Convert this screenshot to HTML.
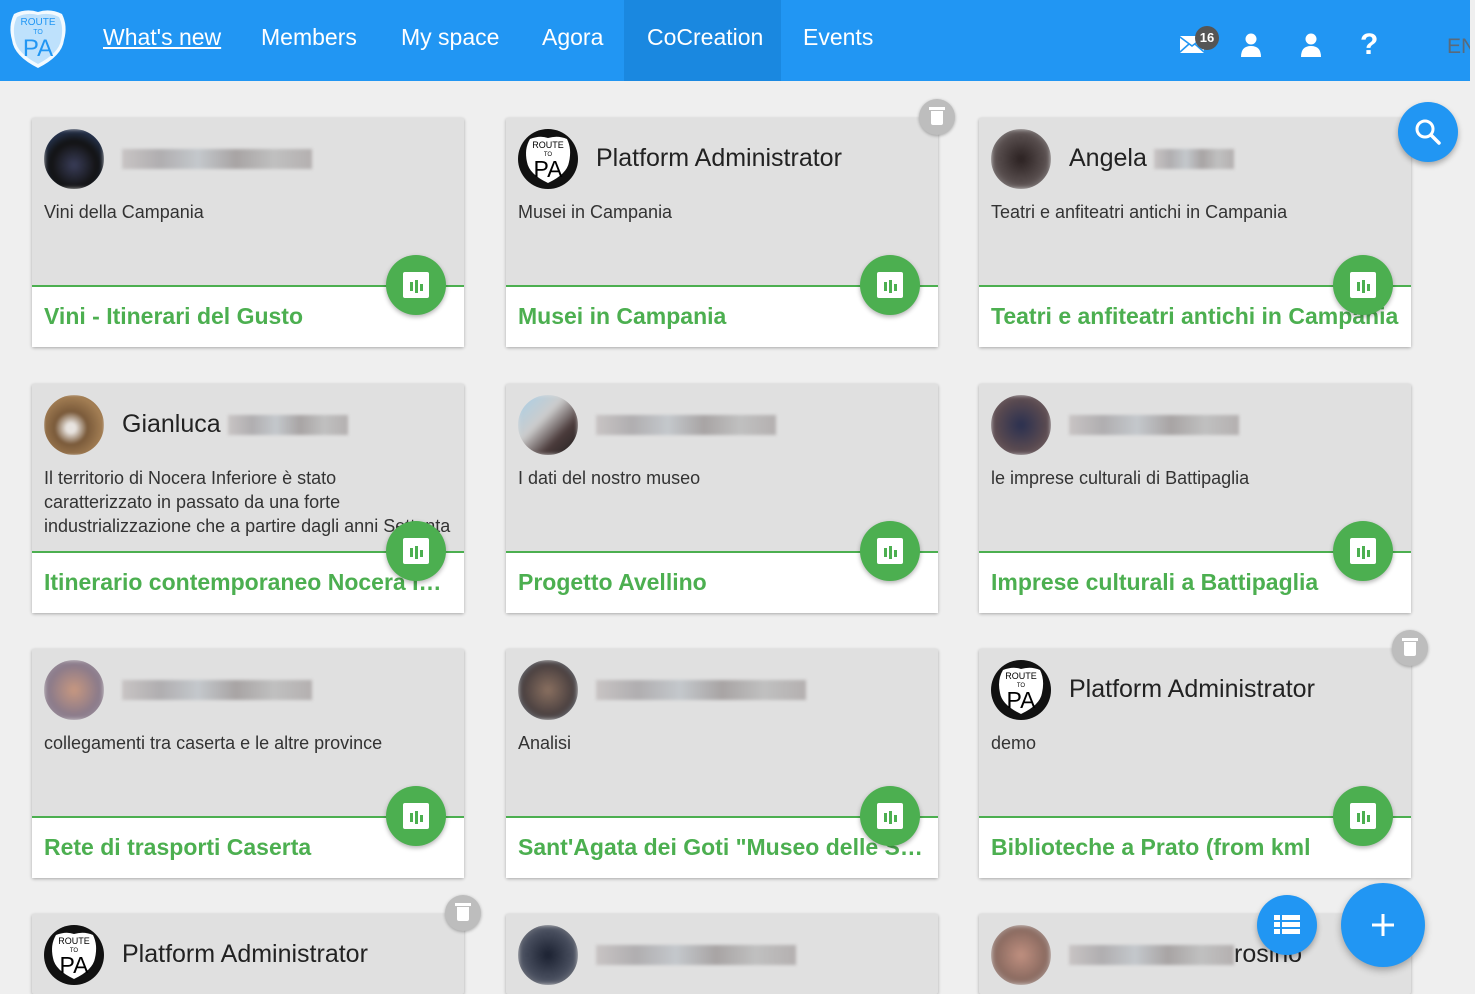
<!DOCTYPE html>
<html style="height:994px;overflow:hidden"><head><meta charset="utf-8">
<style>
*{margin:0;padding:0;box-sizing:border-box}
body{width:1475px;height:994px;overflow:hidden;background:#efefef;font-family:"Liberation Sans",Arial,sans-serif;position:relative}
.hdr{position:absolute;left:0;top:0;width:1470px;height:81px;background:#2196f3}
.nav{position:absolute;top:24px;color:#fff;font-size:23px}
.act{position:absolute;left:624px;top:0;width:157px;height:81px;background:#1a88e0}
.card{position:absolute;width:432px;height:229px;background:#e0e0e0;box-shadow:0 1px 3px rgba(0,0,0,.3);border-radius:2px}
.av{position:absolute;left:12px;top:11px;width:60px;height:60px;border-radius:50%;overflow:hidden}
.nm{position:absolute;left:90px;top:26px;font-size:25px;color:#222;white-space:nowrap}
.bl{display:inline-block;height:20px;vertical-align:middle;background:linear-gradient(90deg,#c8c4c4,#b0aeb0,#c4c8cc,#a8a4a4,#c0c0c0,#b4b0b0);filter:blur(1.5px)}
.ds{position:absolute;left:12px;top:82px;width:420px;font-size:18px;line-height:24px;color:#333;white-space:nowrap}
.ln{position:absolute;left:0;top:167px;width:432px;height:2px;background:#4caf50}
.wh{position:absolute;left:0;top:169px;width:432px;height:60px;background:#fff}
.tt{position:absolute;left:12px;top:185px;width:405px;font-size:23px;font-weight:bold;color:#4caf50;white-space:nowrap;overflow:hidden;text-overflow:ellipsis}
.fab{position:absolute;left:354px;top:137px;width:60px;height:60px;border-radius:50%;background:#4caf50;box-shadow:0 2px 5px rgba(0,0,0,.3);z-index:2}
.fab::before{content:"";position:absolute;left:17px;top:17px;width:26px;height:26px;background:#fff;border-radius:2px}
.fab i{position:absolute;width:3px;background:#4caf50;bottom:24px}
.tr{position:absolute;left:413px;top:-19px;width:36px;height:36px;border-radius:50%;background:#bdbdbd;box-shadow:0 1px 3px rgba(0,0,0,.3);z-index:3}
.tr::before{content:"";position:absolute;left:12px;top:12px;width:12px;height:14px;background:#fff;border-radius:0 0 2px 2px}
.tr::after{content:"";position:absolute;left:10px;top:8px;width:16px;height:3px;background:#fff}
.pix{width:60px;height:60px;filter:blur(2px)}
</style></head><body>
<div class="hdr">
 <div class="act"></div>
 <svg style="position:absolute;left:6px;top:6px" width="64" height="64" viewBox="0 0 64 64">
  <path d="M8 8 Q20 2 32 6 Q44 2 56 8 Q62 20 58 34 Q56 50 32 62 Q8 50 6 34 Q2 20 8 8Z" fill="#fff" opacity=".95"/>
  <path d="M11 11 Q21 6 32 9 Q43 6 53 11 Q58 21 55 34 Q53 47 32 58 Q11 47 9 34 Q6 21 11 11Z" fill="#2196f3" opacity=".25"/>
  <text x="32" y="19" font-size="10" text-anchor="middle" fill="#2196f3" font-family="Liberation Sans">ROUTE</text>
  <text x="32" y="28" font-size="7" text-anchor="middle" fill="#2196f3" font-family="Liberation Sans">TO</text>
  <text x="32" y="50" font-size="24" text-anchor="middle" fill="#2196f3" font-family="Liberation Sans">PA</text>
 </svg>
 <div class="nav" style="left:103px;text-decoration:underline">What's new</div>
 <div class="nav" style="left:261px">Members</div>
 <div class="nav" style="left:401px">My space</div>
 <div class="nav" style="left:542px">Agora</div>
 <div class="nav" style="left:647px">CoCreation</div>
 <div class="nav" style="left:803px">Events</div>
 <svg style="position:absolute;left:1179px;top:35px" width="26" height="19" viewBox="0 0 26 19"><rect x="1" y="1" width="24" height="17" fill="#fff" rx="1"/><path d="M1 2 L13 11 L25 2 M1 17 L10 9 M25 17 L16 9" stroke="#2196f3" stroke-width="1.6" fill="none"/></svg>
 <div style="position:absolute;left:1195px;top:26px;width:24px;height:24px;border-radius:50%;background:#555;color:#fff;font-size:13px;font-weight:bold;text-align:center;line-height:24px">16</div>
 <svg style="position:absolute;left:1240px;top:33px" width="22" height="24" viewBox="0 0 22 24"><circle cx="11" cy="6" r="5.5" fill="#fff"/><path d="M1 24 Q1 13 11 13 Q21 13 21 24Z" fill="#fff"/></svg>
 <svg style="position:absolute;left:1300px;top:33px" width="22" height="24" viewBox="0 0 22 24"><circle cx="11" cy="6" r="5.5" fill="#fff"/><path d="M1 24 Q1 13 11 13 Q21 13 21 24Z" fill="#fff"/></svg>
 <div style="position:absolute;left:1360px;top:28px;color:#fff;font-size:30px;font-weight:bold">?</div>
 <div style="position:absolute;left:1447px;top:35px;color:#5a6a7a;font-size:21px">EN</div>
</div>
<div style="position:absolute;left:1470px;top:0;width:5px;height:81px;background:#efefef"></div>

<div class="card" style="left:32px;top:118px">
 <div class="av"><div class="pix" style="background:radial-gradient(circle at 50% 60%,#3a3e5a,#111 50%,#2a3a5a 80%)"></div></div>
 <div class="nm"><span class="bl" style="width:190px"></span></div>
 <div class="ds">Vini della Campania</div>
 <div class="ln"></div><div class="wh"></div>
 <div class="tt">Vini - Itinerari del Gusto</div>
 <div class="fab"><i style="left:24px;height:9px"></i><i style="left:29px;height:13px;bottom:22px"></i><i style="left:34px;height:7px"></i></div>
</div>
<div class="card" style="left:506px;top:118px">
 <div class="tr"></div>
 <div class="av" style="background:#111"><svg width="60" height="60" viewBox="0 0 60 60"><path d="M12 10 Q22 6 30 9 Q40 6 49 10 Q54 20 51 33 Q49 45 30 54 Q11 45 9 33 Q6 20 12 10Z" fill="#fff"/><text x="30" y="19" font-size="9" text-anchor="middle" font-family="Liberation Sans">ROUTE</text><text x="30" y="27" font-size="6" text-anchor="middle" font-family="Liberation Sans">TO</text><text x="30" y="48" font-size="23" text-anchor="middle" font-family="Liberation Sans">PA</text></svg></div>
 <div class="nm">Platform Administrator</div>
 <div class="ds">Musei in Campania</div>
 <div class="ln"></div><div class="wh"></div>
 <div class="tt">Musei in Campania</div>
 <div class="fab"><i style="left:24px;height:9px"></i><i style="left:29px;height:13px;bottom:22px"></i><i style="left:34px;height:7px"></i></div>
</div>
<div class="card" style="left:979px;top:118px">
 <div class="av"><div class="pix" style="background:radial-gradient(circle,#2a2020,#5a5050 60%,#bbb)"></div></div>
 <div class="nm">Angela <span class="bl" style="width:80px"></span></div>
 <div class="ds">Teatri e anfiteatri antichi in Campania</div>
 <div class="ln"></div><div class="wh"></div>
 <div class="tt" style="width:420px;text-overflow:clip">Teatri e anfiteatri antichi in Campania</div>
 <div class="fab"><i style="left:24px;height:9px"></i><i style="left:29px;height:13px;bottom:22px"></i><i style="left:34px;height:7px"></i></div>
</div>

<div class="card" style="left:32px;top:384px">
 <div class="av"><div class="pix" style="filter:blur(1px);background:radial-gradient(circle at 45% 55%,#e8e4e0 10%,#7a5a3a 35%,#a58055 70%,#6a4a2a)"></div></div>
 <div class="nm">Gianluca <span class="bl" style="width:120px"></span></div>
 <div class="ds">Il territorio di Nocera Inferiore è stato<br>caratterizzato in passato da una forte<br>industrializzazione che a partire dagli anni Settanta</div>
 <div class="ln"></div><div class="wh"></div>
 <div class="tt">Itinerario contemporaneo Nocera Inferiore</div>
 <div class="fab"><i style="left:24px;height:9px"></i><i style="left:29px;height:13px;bottom:22px"></i><i style="left:34px;height:7px"></i></div>
</div>
<div class="card" style="left:506px;top:384px">
 <div class="av"><div class="pix" style="background:linear-gradient(135deg,#a8d0e8,#ccc 40%,#4a3a3a 70%,#222)"></div></div>
 <div class="nm"><span class="bl" style="width:180px"></span></div>
 <div class="ds">I dati del nostro museo</div>
 <div class="ln"></div><div class="wh"></div>
 <div class="tt">Progetto Avellino</div>
 <div class="fab"><i style="left:24px;height:9px"></i><i style="left:29px;height:13px;bottom:22px"></i><i style="left:34px;height:7px"></i></div>
</div>
<div class="card" style="left:979px;top:384px">
 <div class="av"><div class="pix" style="background:radial-gradient(circle,#2a3050,#5a4a50 60%,#8a7a7a)"></div></div>
 <div class="nm"><span class="bl" style="width:170px"></span></div>
 <div class="ds">le imprese culturali di Battipaglia</div>
 <div class="ln"></div><div class="wh"></div>
 <div class="tt">Imprese culturali a Battipaglia</div>
 <div class="fab"><i style="left:24px;height:9px"></i><i style="left:29px;height:13px;bottom:22px"></i><i style="left:34px;height:7px"></i></div>
</div>

<div class="card" style="left:32px;top:649px">
 <div class="av"><div class="pix" style="background:radial-gradient(circle,#c89880,#8a7a8a 60%,#b0a8b0)"></div></div>
 <div class="nm"><span class="bl" style="width:190px"></span></div>
 <div class="ds">collegamenti tra caserta e le altre province</div>
 <div class="ln"></div><div class="wh"></div>
 <div class="tt">Rete di trasporti Caserta</div>
 <div class="fab"><i style="left:24px;height:9px"></i><i style="left:29px;height:13px;bottom:22px"></i><i style="left:34px;height:7px"></i></div>
</div>
<div class="card" style="left:506px;top:649px">
 <div class="av"><div class="pix" style="background:radial-gradient(circle,#8a7060,#4a4040 60%,#9ab0c0)"></div></div>
 <div class="nm"><span class="bl" style="width:210px"></span></div>
 <div class="ds">Analisi</div>
 <div class="ln"></div><div class="wh"></div>
 <div class="tt">Sant'Agata dei Goti "Museo delle Strade"</div>
 <div class="fab"><i style="left:24px;height:9px"></i><i style="left:29px;height:13px;bottom:22px"></i><i style="left:34px;height:7px"></i></div>
</div>
<div class="card" style="left:979px;top:649px">
 <div class="tr"></div>
 <div class="av" style="background:#111"><svg width="60" height="60" viewBox="0 0 60 60"><path d="M12 10 Q22 6 30 9 Q40 6 49 10 Q54 20 51 33 Q49 45 30 54 Q11 45 9 33 Q6 20 12 10Z" fill="#fff"/><text x="30" y="19" font-size="9" text-anchor="middle" font-family="Liberation Sans">ROUTE</text><text x="30" y="27" font-size="6" text-anchor="middle" font-family="Liberation Sans">TO</text><text x="30" y="48" font-size="23" text-anchor="middle" font-family="Liberation Sans">PA</text></svg></div>
 <div class="nm">Platform Administrator</div>
 <div class="ds">demo</div>
 <div class="ln"></div><div class="wh"></div>
 <div class="tt">Biblioteche a Prato (from kml</div>
 <div class="fab"><i style="left:24px;height:9px"></i><i style="left:29px;height:13px;bottom:22px"></i><i style="left:34px;height:7px"></i></div>
</div>

<div class="card" style="left:32px;top:914px;height:80px">
 <div class="tr"></div>
 <div class="av" style="background:#111"><svg width="60" height="60" viewBox="0 0 60 60"><path d="M12 10 Q22 6 30 9 Q40 6 49 10 Q54 20 51 33 Q49 45 30 54 Q11 45 9 33 Q6 20 12 10Z" fill="#fff"/><text x="30" y="19" font-size="9" text-anchor="middle" font-family="Liberation Sans">ROUTE</text><text x="30" y="27" font-size="6" text-anchor="middle" font-family="Liberation Sans">TO</text><text x="30" y="48" font-size="23" text-anchor="middle" font-family="Liberation Sans">PA</text></svg></div>
 <div class="nm">Platform Administrator</div>
</div>
<div class="card" style="left:506px;top:914px;height:80px">
 <div class="av"><div class="pix" style="background:radial-gradient(circle,#1a2030,#4a5060 60%,#aaa)"></div></div>
 <div class="nm"><span class="bl" style="width:200px"></span></div>
</div>
<div class="card" style="left:979px;top:914px;height:80px">
 <div class="av"><div class="pix" style="background:radial-gradient(circle,#c09080,#8a6a60 60%,#ddd)"></div></div>
 <div class="nm"><span class="bl" style="width:165px"></span>rosino</div>
</div>

<div style="position:absolute;left:1398px;top:102px;width:60px;height:60px;border-radius:50%;background:#2196f3;box-shadow:0 3px 6px rgba(0,0,0,.3)">
 <svg width="60" height="60" viewBox="0 0 60 60"><circle cx="27" cy="27" r="8" stroke="#fff" stroke-width="3" fill="none"/><path d="M33 33 L41 41" stroke="#fff" stroke-width="3.5" stroke-linecap="round"/></svg>
</div>
<div style="position:absolute;left:1257px;top:895px;width:60px;height:60px;border-radius:50%;background:#2196f3;box-shadow:0 3px 6px rgba(0,0,0,.3)">
 <svg width="60" height="60" viewBox="0 0 60 60"><g fill="#fff"><rect x="17" y="20" width="6" height="5"/><rect x="25" y="20" width="18" height="5"/><rect x="17" y="27" width="6" height="5"/><rect x="25" y="27" width="18" height="5"/><rect x="17" y="34" width="6" height="5"/><rect x="25" y="34" width="18" height="5"/></g></svg>
</div>
<div style="position:absolute;left:1341px;top:883px;width:84px;height:84px;border-radius:50%;background:#2196f3;box-shadow:0 3px 8px rgba(0,0,0,.3)">
 <svg width="84" height="84" viewBox="0 0 84 84"><path d="M42 31 V53 M31 42 H53" stroke="#fff" stroke-width="3"/></svg>
</div>
</body></html>
